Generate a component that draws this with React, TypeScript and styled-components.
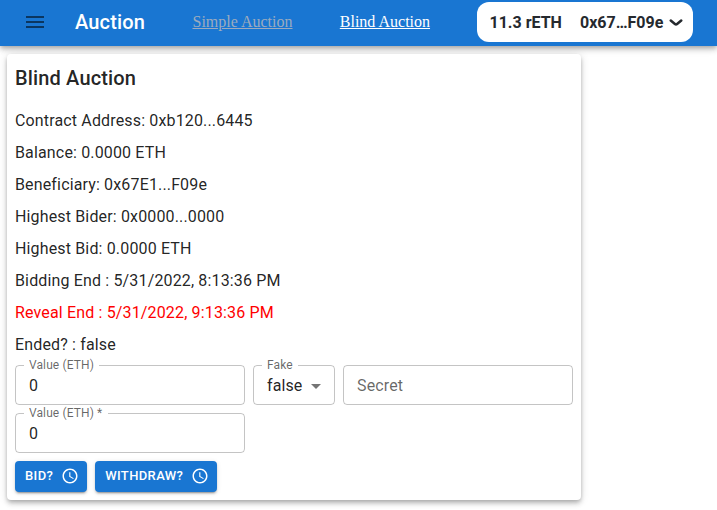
import React from "react";
import styled, { createGlobalStyle } from "styled-components";

const GlobalStyle = createGlobalStyle`
  *, *::before, *::after { box-sizing: border-box; }
  body {
    margin: 0;
    background: #fff;
    color: rgba(0, 0, 0, 0.87);
    font-family: Roboto, "Liberation Sans", sans-serif;
    font-size: 16px;
    line-height: 1.5;
  }
`;

const Page = styled.div`
  min-height: 100vh;
`;

const AppBar = styled.header`
  display: flex;
  align-items: center;
  height: 46px;
  padding-left: 23px;
  background: #1976d2;
  box-shadow: 0 2px 4px -1px rgba(0, 0, 0, 0.2), 0 4px 5px 0 rgba(0, 0, 0, 0.14),
    0 1px 10px 0 rgba(0, 0, 0, 0.12);
`;

const MenuButton = styled.button`
  display: flex;
  margin: 0 28px 2px 0;
  padding: 0;
  border: 0;
  background: none;
  color: rgba(0, 0, 0, 0.54);
`;

const Brand = styled.div`
  width: 117.5px;
  margin-bottom: 2px;
  color: #fff;
  font-size: 20px;
  font-weight: 500;
  line-height: 32px;
  letter-spacing: 0.15px;
`;

const NavLink = styled.a<{ $active?: boolean }>`
  width: 147.3px;
  margin-bottom: 2px;
  color: ${(p) => (p.$active ? "#fff" : "#9cabbe")};
  font-family: "Liberation Serif", serif;
  font-size: 16px;
  line-height: 18px;
  text-decoration: underline;
`;

const Wallet = styled.div`
  display: flex;
  align-items: center;
  width: 216px;
  height: 40px;
  margin: 0 0 2px -10.6px;
  padding: 1px 0 0 13px;
  border-radius: 12px;
  background: #fff;
  color: #25292e;
  font-size: 16px;
  font-weight: 700;
`;

const Balance = styled.span`
  width: 90.5px;
`;

const Account = styled.span`
  margin-right: 6px;
`;

const Card = styled.main`
  display: flex;
  flex-direction: column;
  width: 574px;
  height: 446px;
  margin: 8px 0 0 7px;
  padding: 8px;
  border-radius: 4px;
  background: #fff;
  box-shadow: 0 2px 4px -1px rgba(0, 0, 0, 0.2), 0 4px 5px 0 rgba(0, 0, 0, 0.14),
    0 1px 10px 0 rgba(0, 0, 0, 0.12);
`;

const Title = styled.h1`
  margin: 0 0 15px;
  font-size: 20px;
  font-weight: 500;
  line-height: 32px;
  letter-spacing: 0.15px;
`;

const Details = styled.div`
  display: flex;
  flex-direction: column;
  gap: 8px;
`;

const Detail = styled.p<{ $alert?: boolean }>`
  margin: 0;
  line-height: 24px;
  letter-spacing: 0.15px;
  ${(p) => p.$alert && "color: #f00;"}
`;

const Form = styled.form`
  display: flex;
  flex-direction: column;
  gap: 8px;
  margin-top: 8px;
`;

const Row = styled.div`
  display: flex;
  gap: 8px;
`;

const Outline = styled.fieldset<{ $width: number; $labelled?: boolean }>`
  display: block;
  width: ${(p) => p.$width}px;
  min-width: 0;
  height: ${(p) => (p.$labelled ? 45 : 40)}px;
  margin: ${(p) => (p.$labelled ? -5 : 0)}px 0 0;
  padding: 0 8px;
  border: 1px solid rgba(0, 0, 0, 0.23);
  border-radius: 4px;
`;

const Label = styled.legend`
  height: 11px;
  padding: 0 5.5px 0 5px;
  color: rgba(0, 0, 0, 0.6);
  font-size: 12px;
  line-height: 11px;
  letter-spacing: 0.11px;
  white-space: nowrap;
`;

const Input = styled.input`
  display: block;
  width: 100%;
  height: 23px;
  padding: 0 5px;
  border: 0;
  outline: 0;
  background: none;
  color: rgba(0, 0, 0, 0.87);
  font: inherit;
  letter-spacing: 0.15px;
  margin-top: ${(p) => (p.placeholder ? 8 : 3)}px;
  &::placeholder {
    color: rgba(0, 0, 0, 0.6);
    opacity: 1;
  }
`;

const Select = styled.div`
  display: flex;
  align-items: center;
  justify-content: space-between;
  height: 23px;
  margin-top: 3px;
  padding-left: 5px;
  letter-spacing: 0.1px;
  svg {
    margin-right: -2px;
  }
`;

const Button = styled.button`
  display: flex;
  align-items: center;
  gap: 8px;
  height: 30.75px;
  padding: 4px 10px;
  border: 0;
  border-radius: 4px;
  background: #1976d2;
  color: #fff;
  font: 500 13px/22.75px Roboto, sans-serif;
  letter-spacing: 0.37px;
  box-shadow: 0 3px 1px -2px rgba(0, 0, 0, 0.2), 0 2px 2px 0 rgba(0, 0, 0, 0.14),
    0 1px 5px 0 rgba(0, 0, 0, 0.12);
  svg {
    margin-right: -2px;
  }
`;

const ClockIcon = () => (
  <svg width="18" height="18" viewBox="0 0 24 24" fill="currentColor">
    <path d="M11.99 2C6.47 2 2 6.48 2 12s4.47 10 9.99 10C17.52 22 22 17.52 22 12S17.52 2 11.99 2zM12 20c-4.42 0-8-3.58-8-8s3.58-8 8-8 8 3.58 8 8-3.58 8-8 8z" />
    <path d="M12.5 7H11v6l5.25 3.15.75-1.23-4.5-2.67z" />
  </svg>
);

const details = [
  "Contract Address: 0xb120...6445",
  "Balance: 0.0000 ETH",
  "Beneficiary: 0x67E1...F09e",
  "Highest Bider: 0x0000...0000",
  "Highest Bid: 0.0000 ETH",
  "Bidding End : 5/31/2022, 8:13:36 PM",
  "Reveal End : 5/31/2022, 9:13:36 PM",
  "Ended? : false",
];

export default function App() {
  return (
    <Page>
      <GlobalStyle />
      <AppBar>
        <MenuButton aria-label="menu">
          <svg width="24" height="24" viewBox="0 0 24 24" fill="currentColor">
            <path d="M3 18h18v-2H3v2zm0-5h18v-2H3v2zm0-7v2h18V6H3z" />
          </svg>
        </MenuButton>
        <Brand>Auction</Brand>
        <NavLink href="#simple">Simple Auction</NavLink>
        <NavLink href="#blind" $active>
          Blind Auction
        </NavLink>
        <Wallet>
          <Balance>11.3 rETH</Balance>
          <Account>0x67…F09e</Account>
          <svg width="14" height="7" viewBox="0 0 14 7" fill="none">
            <path
              d="M1.75 1.5L5.92 4.98C6.54 5.5 7.46 5.5 8.08 4.98L12.25 1.5"
              stroke="currentColor"
              strokeWidth="2.5"
              strokeLinecap="round"
              strokeLinejoin="round"
            />
          </svg>
        </Wallet>
      </AppBar>
      <Card>
        <Title>Blind Auction</Title>
        <Details>
          {details.map((text) => (
            <Detail key={text} $alert={text.startsWith("Reveal")}>
              {text}
            </Detail>
          ))}
        </Details>
        <Form>
          <Row>
            <Outline $width={230} $labelled>
              <Label>Value (ETH)</Label>
              <Input defaultValue="0" />
            </Outline>
            <Outline $width={82} $labelled>
              <Label>Fake</Label>
              <Select>
                false
                <svg width="24" height="24" viewBox="0 0 24 24" fill="rgba(0,0,0,0.54)">
                  <path d="M7 10l5 5 5-5z" />
                </svg>
              </Select>
            </Outline>
            <Outline $width={230}>
              <Input placeholder="Secret" />
            </Outline>
          </Row>
          <Row>
            <Outline $width={230} $labelled>
              <Label>Value (ETH) *</Label>
              <Input defaultValue="0" />
            </Outline>
          </Row>
          <Row>
            <Button type="button">
              BID?
              <ClockIcon />
            </Button>
            <Button type="button">
              WITHDRAW?
              <ClockIcon />
            </Button>
          </Row>
        </Form>
      </Card>
    </Page>
  );
}
